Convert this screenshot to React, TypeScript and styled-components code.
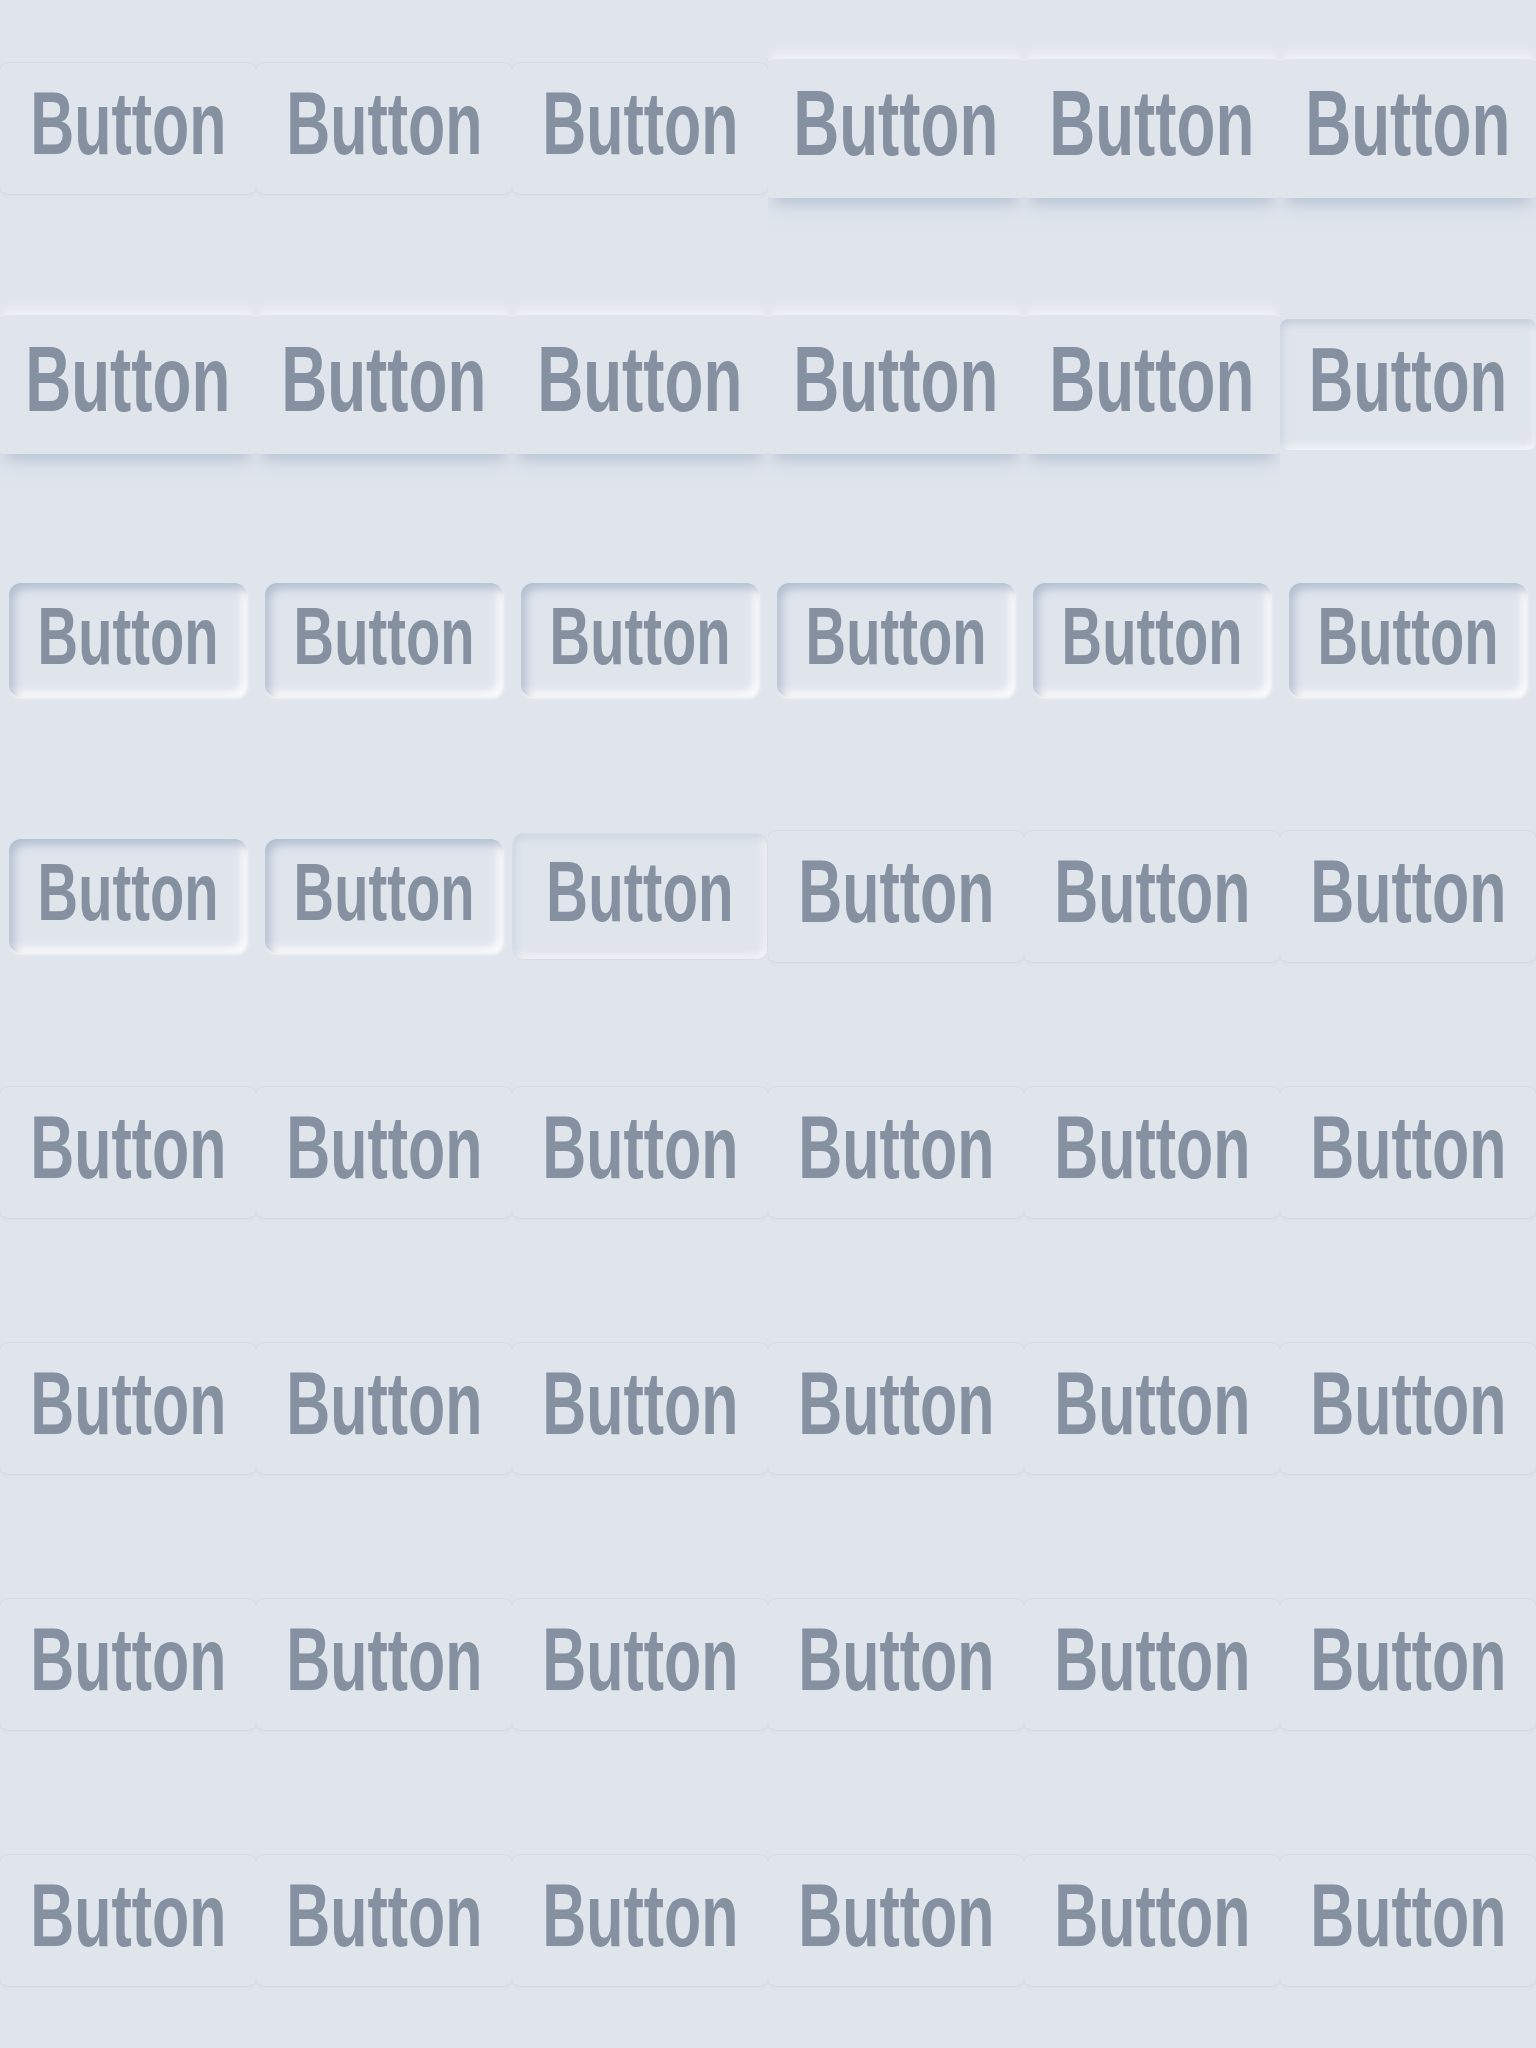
import React from "react";
import styled, { createGlobalStyle, css } from "styled-components";

type Variant = "flat" | "raised" | "soft" | "deep" | "light";

const GlobalStyle = createGlobalStyle`
  html, body {
    margin: 0;
    padding: 0;
    background: #e0e5ec;
  }
  #root {
    min-height: 2048px;
  }
`;

const Grid = styled.main`
  display: grid;
  grid-template-columns: repeat(6, 256px);
  grid-auto-rows: 256px;
  width: 1536px;
  background: #e0e5ec;
`;

const Cell = styled.div`
  display: flex;
  align-items: center;
  justify-content: center;
  overflow: hidden;
`;

const variantStyles: Record<Variant, ReturnType<typeof css>> = {
  flat: css`
    width: 256px;
    height: 131px;
    border-radius: 8px;
    box-shadow: 0 0 0 1px #d6dbe3, 0 1px 2px rgba(175, 186, 202, 0.25);
    font-size: 89px;
  `,
  raised: css`
    width: 256px;
    height: 139px;
    border-radius: 3px;
    box-shadow: 0 -9px 12px -2px rgba(255, 255, 255, 0.5),
      0 12px 16px -5px rgba(160, 174, 196, 0.6);
    font-size: 93px;
  `,
  soft: css`
    width: 256px;
    height: 131px;
    border-radius: 8px;
    box-shadow: inset 2px 5px 7px rgba(175, 188, 206, 0.55),
      inset -2px -4px 7px rgba(255, 255, 255, 0.65);
    font-size: 90px;
  `,
  deep: css`
    width: 238px;
    height: 114px;
    border-radius: 12px;
    box-shadow: inset 5px 6px 8px rgba(160, 176, 198, 0.7),
      inset -5px -5px 8px rgba(255, 255, 255, 0.9),
      1px 2px 3px rgba(255, 255, 255, 0.6);
    font-size: 82px;
  `,
  light: css`
    width: 254px;
    height: 125px;
    border-radius: 10px;
    box-shadow: 0 0 0 1px #d8dde5,
      inset 3px 4px 7px rgba(185, 196, 212, 0.45),
      inset -3px -4px 7px rgba(255, 255, 255, 0.6);
    font-size: 85px;
  `,
};

const Button = styled.button<{ $variant: Variant }>`
  display: flex;
  align-items: center;
  justify-content: center;
  flex: none;
  padding: 0;
  border: none;
  background: #e0e5ec;
  color: #8590a0;
  font-family: "Liberation Sans Narrow", "Liberation Sans", Arial, sans-serif;
  font-weight: 700;
  line-height: 1;
  cursor: pointer;
  ${(p) => variantStyles[p.$variant]}
`;

const Label = styled.span`
  display: inline-block;
  transform: scaleX(0.685);
  padding-bottom: 9px;
  white-space: nowrap;
`;

const rows: Variant[][] = [
  ["flat", "flat", "flat", "raised", "raised", "raised"],
  ["raised", "raised", "raised", "raised", "raised", "soft"],
  ["deep", "deep", "deep", "deep", "deep", "deep"],
  ["deep", "deep", "light", "flat", "flat", "flat"],
  ["flat", "flat", "flat", "flat", "flat", "flat"],
  ["flat", "flat", "flat", "flat", "flat", "flat"],
  ["flat", "flat", "flat", "flat", "flat", "flat"],
  ["flat", "flat", "flat", "flat", "flat", "flat"],
];

export default function App() {
  return (
    <>
      <GlobalStyle />
      <Grid>
        {rows.flatMap((row, r) =>
          row.map((v, c) => (
            <Cell key={`${r}-${c}`}>
              <Button $variant={v}>
                <Label>Button</Label>
              </Button>
            </Cell>
          ))
        )}
      </Grid>
    </>
  );
}
